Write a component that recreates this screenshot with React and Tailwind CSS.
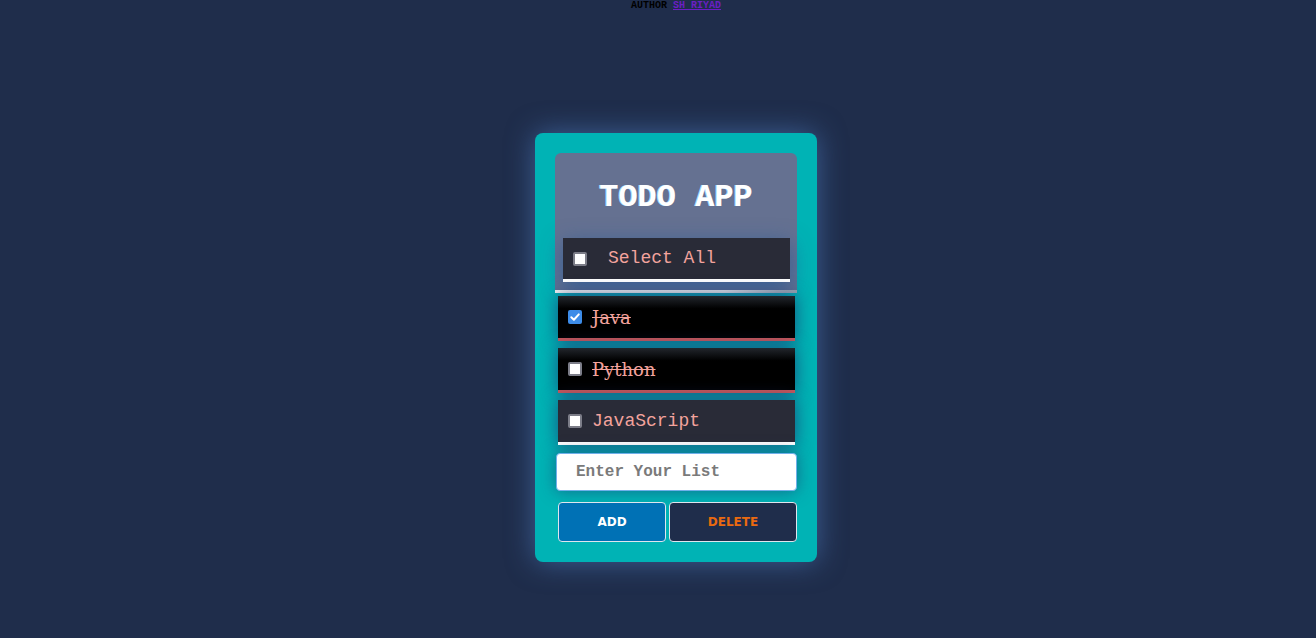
import React, { useState } from "react";

const mono = { fontFamily: '"Liberation Mono", "Courier New", monospace' };

function Check({ initial }) {
  const [on, setOn] = useState(!!initial);
  return (
    <button
      type="button"
      onClick={() => setOn(!on)}
      className={`shrink-0 w-[14px] h-[14px] rounded-[2px] flex items-center justify-center ${
        on ? "bg-[#3d8ce8]" : "bg-white border-2 border-[#7c7d88]"
      }`}
    >
      {on && (
        <svg viewBox="0 0 14 14" className="w-[14px] h-[14px]">
          <path
            d="M3.3 7.2 L5.9 9.7 L10.8 4.4"
            fill="none"
            stroke="white"
            strokeWidth="2"
            strokeLinecap="round"
            strokeLinejoin="round"
          />
        </svg>
      )}
    </button>
  );
}

function Item({ label, checked, done, dark }) {
  return (
    <div
      className={`flex h-[45px] items-center pl-[10px] border-b-[3px] shadow-[0_0_18px_rgba(30,50,110,0.75)] ${
        dark
          ? "bg-[#292b37] border-white"
          : "bg-[linear-gradient(to_bottom,#22262c_0%,#000_30%,#000_100%)] border-[#c9575a]"
      }`}
    >
      <Check initial={checked} />
      <span
        className={`ml-[10px] text-[#f3a39d] text-[18px] ${done ? "line-through" : ""}`}
        style={
          done
            ? { fontFamily: '"DejaVu Serif", "Liberation Serif", serif' }
            : mono
        }
      >
        {label}
      </span>
    </div>
  );
}

export default function App() {
  return (
    <div className="min-h-[638px] w-full bg-[#1f2d4b] flex flex-col items-center pl-[36px]">
      <div
        className="h-[12px] text-[10px] leading-[11px] font-bold text-black"
        style={mono}
      >
        AUTHOR{" "}
        <a href="#" className="text-[#6a1fc4] underline">
          SH RIYAD
        </a>
      </div>
      <div className="mt-[121px] w-[282px] h-[429px] bg-[#00b3b5] rounded-[8px] p-[20px] shadow-[0_0_28px_rgba(80,130,200,0.6)] flex flex-col">
        <div className="bg-[#657191] rounded-t-[6px] pt-[26px] pb-[8px] flex flex-col">
          <h1
            className="text-center text-white font-bold text-[32px] leading-[38px] [text-shadow:-1px_0_0_#9fd8ff]"
            style={mono}
          >
            TODO APP
          </h1>
          <div className="mt-[21px] ml-[8px] mr-[7px] h-[44px] bg-[#292b37] border-b-[3px] border-white flex items-center pl-[10px] shadow-[0_6px_22px_rgba(40,90,150,0.8)]">
            <Check />
            <span className="ml-[21px] text-[18px] text-[#f3a39d]" style={mono}>
              Select All
            </span>
          </div>
        </div>
        <div className="h-[3px] bg-[linear-gradient(to_right,#f4f4f4,#e6e8ea_70%,#98a2ae)]" />
        <div className="mt-[3px] ml-[3px] mr-[2px] flex flex-col gap-[7px]">
          <Item label="Java" checked done />
          <Item label="Python" done />
          <Item label="JavaScript" dark />
        </div>
        <input
          type="text"
          placeholder="Enter Your List"
          className="mt-[8px] ml-[1px] h-[38px] bg-white rounded-[4px] border border-[#6fb0ea] pl-[19px] text-[16px] font-bold placeholder:text-[#7a7a7a] outline-none shadow-[0_0_16px_rgba(30,60,110,0.6)]"
          style={mono}
        />
        <div className="mt-[11px] ml-[3px] flex gap-[3px] h-[40px]">
          <button
            className="w-[108px] bg-[#0071b5] text-white border border-[#dfe6ee] rounded-[4px] text-[12px] font-bold"
            style={{ fontFamily: '"DejaVu Sans", Verdana, sans-serif' }}
          >
            ADD
          </button>
          <button
            className="w-[128px] bg-[#1f2d4b] text-[#ea6a10] border border-[#dfe6ee] rounded-[4px] text-[12px] font-bold"
            style={{ fontFamily: '"DejaVu Sans", Verdana, sans-serif' }}
          >
            DELETE
          </button>
        </div>
      </div>
    </div>
  );
}
